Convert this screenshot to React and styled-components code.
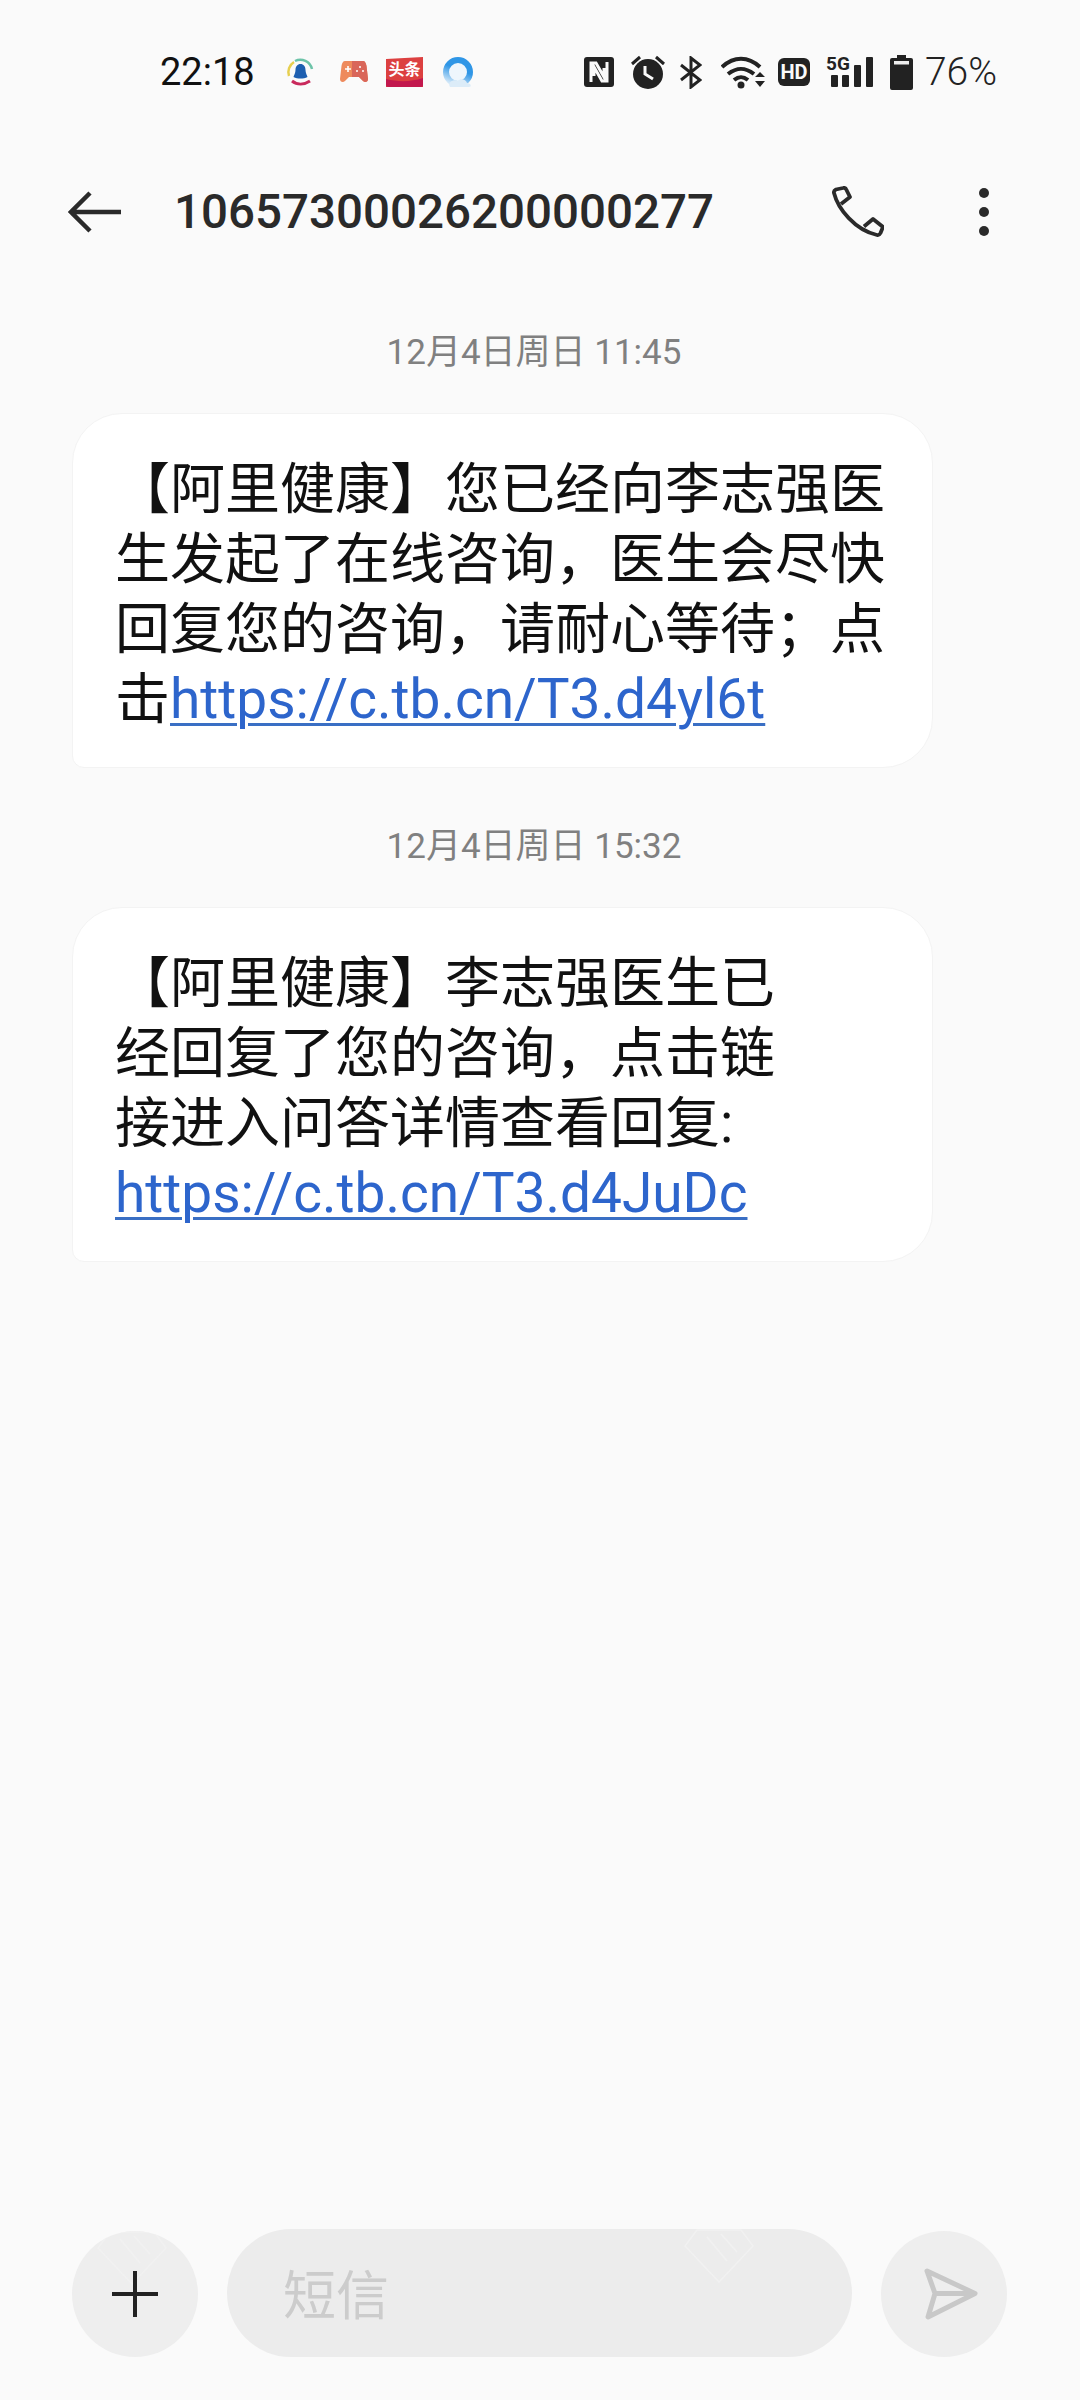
import styled, { createGlobalStyle } from "styled-components";

const GlobalStyle = createGlobalStyle`
  html, body {
    margin: 0;
    padding: 0;
    background: #fafafa;
  }
  * { box-sizing: border-box; }
`;

const CJK = `Roboto, "Noto Sans CJK SC", sans-serif`;

const Page = styled.div`
  width: 1080px;
  height: 2400px;
  display: flex;
  flex-direction: column;
  background: #fafafa;
  font-family: ${CJK};
  overflow: hidden;
`;

const StatusBar = styled.div`
  height: 144px;
  padding: 52px 83px 0 160px;
  display: flex;
  align-items: flex-start;
  color: #111;
`;

const Clock = styled.div`
  width: 125px;
  height: 40px;
  line-height: 40px;
  font-size: 38px;
  color: #111;
`;

const IconRow = styled.div`
  display: flex;
  align-items: center;
  height: 40px;
  margin-left: ${(p) => (p.$right ? "auto" : "0")};
`;

const Gap = styled.span`
  flex-shrink: 0;
  width: ${(p) => p.$w}px;
`;

const Battery = styled.span`
  font-size: 39px;
  font-weight: 300;
  line-height: 40px;
  color: #222;
  margin-left: 12px;
`;

const Header = styled.div`
  height: 136px;
  display: flex;
  align-items: center;
  padding: 0 0 0 68px;
`;

const Title = styled.h1`
  margin: 0 0 0 52px;
  font-size: 47.5px;
  font-weight: 500;
  color: #2a2a2a;
  width: 658px;
  line-height: 60px;
  white-space: nowrap;
`;

const HeaderAction = styled.div`
  display: flex;
  align-items: center;
  justify-content: center;
  margin-left: ${(p) => p.$gap}px;
`;

const Messages = styled.div`
  flex: 1;
  padding: 0 72px;
  display: flex;
  flex-direction: column;
  gap: 6px;
`;

const Stamp = styled.div`
  height: 133px;
  padding: 50px 12px 0 0;
  text-align: center;
  font-size: 35px;
  line-height: 46px;
  color: #808080;
`;

const Bubble = styled.div`
  width: 861px;
  height: 355px;
  padding: 40px 0 0 42px;
  background: #fff;
  border: 1px solid #f3f3f3;
  border-radius: 50px 50px 50px 12px;
  font-size: 55px;
  line-height: 70px;
  color: #111;
`;

const Line = styled.div`
  height: 70px;
  white-space: nowrap;
`;

const Link = styled.span`
  color: #2d65cc;
  text-decoration: underline;
  text-decoration-color: #3a6fc4;
  text-decoration-thickness: 3px;
  text-underline-offset: 5px;
`;

const Composer = styled.div`
  height: 171px;
  padding: 0 73px 43px 72px;
  display: flex;
  align-items: flex-end;
`;

const RoundButton = styled.div`
  position: relative;
  isolation: isolate;
  width: 126px;
  height: 126px;
  padding-left: ${(p) => p.$shift || 0}px;
  border-radius: 50%;
  background: #eeeeee;
  display: flex;
  align-items: center;
  justify-content: center;
  flex-shrink: 0;
  overflow: hidden;
`;

const Input = styled.div`
  position: relative;
  isolation: isolate;
  flex: 1;
  height: 128px;
  margin: 0 29px;
  padding-left: 56px;
  border-radius: 64px;
  background: #ececec;
  color: #cccccc;
  font-size: 53px;
  line-height: 136px;
  overflow: hidden;
`;

const Watermark = styled.svg`
  position: absolute;
  z-index: -1;
  top: ${(p) => p.$top}px;
  left: ${(p) => p.$left}px;
`;

// faint diamond stamp that shows through the composer controls
const Diamond = ({ top, left }) => (
  <Watermark $top={top} $left={left} width="76" height="54" viewBox="0 0 76 54">
    <path d="M16 1h44l12 16-34 36L4 17zM26 8l20 24M40 5l16 18" stroke="#f1f1f1" strokeWidth="1.500" fill="none" />
  </Watermark>
);

const Alarm = () => (
  <svg width="34" height="34" viewBox="0 0 34 34">
    <circle cx="17" cy="19" r="15" fill="#222" />
    <path d="M1 9l8-7M33 9l-8-7" stroke="#222" strokeWidth="3" />
    <path d="M14 11v8l8 5" stroke="#fafafa" strokeWidth="3" fill="none" />
  </svg>
);

const Nfc = () => (
  <svg width="30" height="30" viewBox="0 0 30 30">
    <rect width="30" height="30" rx="3" fill="#222" />
    <path d="M7 25V6h5l8 14v-9M23 5v19h-5l-8-14v9" stroke="#fafafa" strokeWidth="3" fill="none" />
  </svg>
);

const Bluetooth = () => (
  <svg width="22" height="33" viewBox="0 0 22 33">
    <path d="M1 9l19 15-9 7V2l9 7L1 24" stroke="#222" strokeWidth="3" fill="none" />
  </svg>
);

const Wifi = () => (
  <svg width="46" height="34" viewBox="0 0 46 34">
    <path d="M1 12C13 1 27 1 39 12M7 19c9-7 17-7 26 0M13 25c5-4 9-4 14 0" stroke="#222" strokeWidth="4" fill="none" />
    <circle cx="20" cy="30" r="3.500" fill="#222" />
    <path d="M34 22l5-5 5 5zM34 26l5 6 5-6z" fill="#222" />
  </svg>
);

const Hd = () => (
  <svg width="32" height="28" viewBox="0 0 32 28">
    <rect width="32" height="28" rx="6" fill="#222" />
    <text x="16" y="21" textAnchor="middle" fontSize="20" fontWeight="700" fill="#fafafa" fontFamily="Roboto">HD</text>
  </svg>
);

const Signal = () => (
  <svg width="47" height="34" viewBox="0 0 47 34" overflow="visible">
    <text x="0" y="15" fontSize="19" fontWeight="700" fill="#222" fontFamily="Roboto">5G</text>
    <rect x="5" y="20" width="7" height="12" rx="1" fill="#222" />
    <rect x="16" y="20" width="7" height="12" rx="1" fill="#222" />
    <rect x="28" y="10" width="7" height="22" rx="1" fill="#222" />
    <rect x="40" y="2" width="7" height="30" rx="1" fill="#222" />
  </svg>
);

const BatteryIcon = () => (
  <svg width="23" height="35" viewBox="0 0 23 35">
    <path d="M7 0h9v3h5a2 2 0 0 1 2 2v28a2 2 0 0 1-2 2H2a2 2 0 0 1-2-2V5a2 2 0 0 1 2-2h5z" fill="#222" />
    <rect x="4" y="6" width="15" height="3.500" fill="#eee" />
  </svg>
);

const QqIcon = () => (
  <svg width="31" height="31" viewBox="0 0 31 31">
    <path d="M4 19A12 12 0 0 1 9 5" stroke="#e6cf4f" strokeWidth="2.500" fill="none" />
    <path d="M10 4A12 12 0 0 1 27 12" stroke="#6cc3a8" strokeWidth="2.500" fill="none" />
    <path d="M7 24c5 4 12 4 18 0" stroke="#c9295c" strokeWidth="3" fill="none" />
    <path d="M15.500 7c3 0 5 2.500 5 6 0 3 1.500 5 2 7-4 2-10 2-14 0 .5-2 2-4 2-7 0-3.500 2-6 5-6z" fill="#1d5fb0" />
  </svg>
);

const GameIcon = () => (
  <svg width="28" height="24" viewBox="0 0 28 24">
    <path d="M5 1h18c2 0 3 2 3.500 5L28 19c0 3-3 4-5 2l-4-4H9l-4 4c-2 2-5 1-5-2L1.500 6C2 3 3 1 5 1z" fill="#ee8a5c" />
    <path d="M12 1h11c2 0 3 2 3.500 5L28 19c0 3-3 4-5 2l-4-4h-7z" fill="#d9665a" />
    <path d="M5 9h6M8 6v6" stroke="#fff" strokeWidth="1.600" />
    <circle cx="20" cy="7" r="1" fill="#fff" />
    <circle cx="17" cy="11" r="1" fill="#fff" />
    <circle cx="23" cy="11" r="1" fill="#fff" />
  </svg>
);

const TopNewsIcon = () => (
  <svg width="37" height="30" viewBox="0 0 37 30" overflow="visible">
    <path d="M0 2l37-2v30H0z" fill="#dc4040" />
    <path d="M0 22c12 3 25 3 37-1v7c0 1-1 2-2 2H3c-2 0-3-1-3-2z" fill="#c2174d" />
    <text x="18.500" y="18" textAnchor="middle" fontSize="16" fontWeight="700" fill="#fff" fontFamily="'Noto Sans CJK SC'">头条</text>
  </svg>
);

const BrowserIcon = () => (
  <svg width="33" height="31" viewBox="0 0 33 31">
    <defs>
      <linearGradient id="ring" x1="0.7" y1="0" x2="0.3" y2="1">
        <stop offset="0.4" stopColor="#2f96e6" />
        <stop offset="1" stopColor="#cfe6f8" />
      </linearGradient>
    </defs>
    <circle cx="16" cy="15" r="12" stroke="url(#ring)" strokeWidth="6" fill="#eef6fc" />
    <path d="M8 30c-3-5 4-8 8-6 2-3 8-2 9 2 4 0 5 4 2 4z" fill="#dcecf8" />
  </svg>
);

const BackArrow = () => (
  <svg width="54" height="42" viewBox="0 0 54 42">
    <path d="M53 21H3M22 2L3 21l19 19" stroke="#2a2a2a" strokeWidth="4.500" fill="none" />
  </svg>
);

const PhoneIcon = () => (
  <svg width="52" height="52" viewBox="0 0 52 52">
    <path
      d="M2 7C6 23 23 44 45 49c2 .5 3-1 3.500-2L51 41l-10-8-9 7.500M2 7c-.5-2 1-3 2-3.500L11 2c2-.5 3 .5 3.500 2L18 11l-9 7"
      stroke="#2a2a2a"
      strokeWidth="3.800"
      strokeLinejoin="round"
      fill="none"
    />
  </svg>
);

const MoreIcon = () => (
  <svg width="12" height="50" viewBox="0 0 12 50">
    <circle cx="6" cy="6" r="5" fill="#2a2a2a" />
    <circle cx="6" cy="25" r="5" fill="#2a2a2a" />
    <circle cx="6" cy="44" r="5" fill="#2a2a2a" />
  </svg>
);

const PlusIcon = () => (
  <svg width="46" height="46" viewBox="0 0 46 46">
    <path d="M23 0v46M0 23h46" stroke="#222" strokeWidth="4" />
  </svg>
);

const SendIcon = () => (
  <svg width="54" height="54" viewBox="0 0 54 54">
    <path d="M3 4l48 22.500L4 50l7-23.500zM11 26.500h40" stroke="#c8c8c8" strokeWidth="5" strokeLinejoin="round" fill="none" />
  </svg>
);

const messages = [
  {
    time: "12月4日周日 11:45",
    lines: ["【阿里健康】您已经向李志强医", "生发起了在线咨询，医生会尽快", "回复您的咨询，请耐心等待；点"],
    prefix: "击",
    url: "https://c.tb.cn/T3.d4yl6t",
  },
  {
    time: "12月4日周日 15:32",
    lines: ["【阿里健康】李志强医生已", "经回复了您的咨询，点击链", "接进入问答详情查看回复:"],
    prefix: "",
    url: "https://c.tb.cn/T3.d4JuDc",
  },
];

export default function App() {
  return (
    <>
      <GlobalStyle />
      <Page>
        <StatusBar>
          <Clock>22:18</Clock>
          <IconRow>
            <QqIcon />
            <Gap $w={24} />
            <GameIcon />
            <Gap $w={18} />
            <TopNewsIcon />
            <Gap $w={19} />
            <BrowserIcon />
          </IconRow>
          <IconRow $right>
            <Nfc />
            <Gap $w={17} />
            <Alarm />
            <Gap $w={15} />
            <Bluetooth />
            <Gap $w={19} />
            <Wifi />
            <Gap $w={11} />
            <Hd />
            <Gap $w={16} />
            <Signal />
            <Gap $w={17} />
            <BatteryIcon />
            <Battery>76%</Battery>
          </IconRow>
        </StatusBar>
        <Header>
          <BackArrow />
          <Title>10657300026200000277</Title>
          <HeaderAction $gap={0}>
            <PhoneIcon />
          </HeaderAction>
          <HeaderAction $gap={94}>
            <MoreIcon />
          </HeaderAction>
        </Header>
        <Messages>
          {messages.map((m) => (
            <div key={m.time}>
              <Stamp>{m.time}</Stamp>
              <Bubble>
                {m.lines.map((l) => (
                  <Line key={l}>{l}</Line>
                ))}
                <Line>
                  {m.prefix}
                  <Link>{m.url}</Link>
                </Line>
              </Bubble>
            </div>
          ))}
        </Messages>
        <Composer>
          <RoundButton>
            <Diamond top={0} left={22} />
            <PlusIcon />
          </RoundButton>
          <Input>
            短信
            <Diamond top={0} left={454} />
          </Input>
          <RoundButton $shift={14}>
            <SendIcon />
          </RoundButton>
        </Composer>
      </Page>
    </>
  );
}
